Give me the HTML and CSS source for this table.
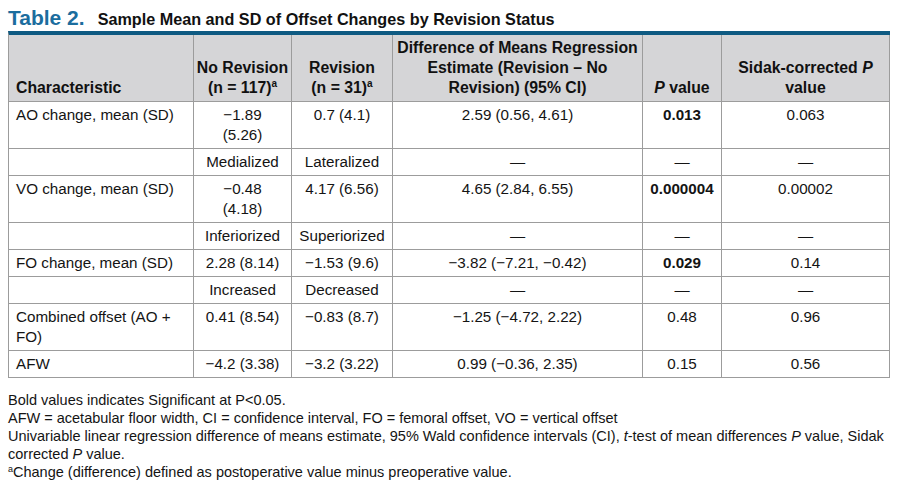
FILE: index.html
```html
<!DOCTYPE html>
<html lang="en">
<head>
<meta charset="utf-8">
<title>Table 2</title>
<link rel="stylesheet" href="styles.css">
</head>
<body>
<div class="page">
  <div class="title">
    <span class="label">Table 2.</span><span class="caption">Sample Mean and SD of Offset Changes by Revision Status</span>
  </div>
  <table class="data">
    <colgroup>
      <col class="c1"><col class="c2"><col class="c3"><col class="c4"><col class="c5"><col class="c6">
    </colgroup>
    <thead>
      <tr>
        <th class="left">Characteristic</th>
        <th>No Revision<br>(n = 117)<sup>a</sup></th>
        <th>Revision<br>(n = 31)<sup>a</sup></th>
        <th>Difference of Means Regression<br>Estimate (Revision – No<br>Revision) (95% CI)</th>
        <th><i>P</i> value</th>
        <th>Sidak-corrected <i>P</i><br>value</th>
      </tr>
    </thead>
    <tbody>
      <tr>
        <td class="left">AO change, mean (SD)</td>
        <td>−1.89<br>(5.26)</td>
        <td>0.7 (4.1)</td>
        <td>2.59 (0.56, 4.61)</td>
        <td><b>0.013</b></td>
        <td>0.063</td>
      </tr>
      <tr>
        <td class="left"></td>
        <td>Medialized</td>
        <td>Lateralized</td>
        <td>—</td>
        <td>—</td>
        <td>—</td>
      </tr>
      <tr>
        <td class="left">VO change, mean (SD)</td>
        <td>−0.48<br>(4.18)</td>
        <td>4.17 (6.56)</td>
        <td>4.65 (2.84, 6.55)</td>
        <td><b>0.000004</b></td>
        <td>0.00002</td>
      </tr>
      <tr>
        <td class="left"></td>
        <td>Inferiorized</td>
        <td>Superiorized</td>
        <td>—</td>
        <td>—</td>
        <td>—</td>
      </tr>
      <tr>
        <td class="left">FO change, mean (SD)</td>
        <td>2.28 (8.14)</td>
        <td>−1.53 (9.6)</td>
        <td>−3.82 (−7.21, −0.42)</td>
        <td><b>0.029</b></td>
        <td>0.14</td>
      </tr>
      <tr>
        <td class="left"></td>
        <td>Increased</td>
        <td>Decreased</td>
        <td>—</td>
        <td>—</td>
        <td>—</td>
      </tr>
      <tr>
        <td class="left">Combined offset (AO +<br>FO)</td>
        <td>0.41 (8.54)</td>
        <td>−0.83 (8.7)</td>
        <td>−1.25 (−4.72, 2.22)</td>
        <td>0.48</td>
        <td>0.96</td>
      </tr>
      <tr>
        <td class="left">AFW</td>
        <td>−4.2 (3.38)</td>
        <td>−3.2 (3.22)</td>
        <td>0.99 (−0.36, 2.35)</td>
        <td>0.15</td>
        <td>0.56</td>
      </tr>
    </tbody>
  </table>
  <div class="notes">
    <p>Bold values indicates Significant at P&lt;0.05.</p>
    <p>AFW = acetabular floor width, CI = confidence interval, FO = femoral offset, VO = vertical offset</p>
    <p>Univariable linear regression difference of means estimate, 95% Wald confidence intervals (CI), <i>t</i>-test of mean differences <i>P</i> value, Sidak<br>corrected <i>P</i> value.</p>
    <p><sup>a</sup>Change (difference) defined as postoperative value minus preoperative value.</p>
  </div>
</div>
</body>
</html>
```

FILE: styles.css
```css
html, body {
  margin: 0;
  padding: 0;
  background: #ffffff;
}

body {
  font-family: "Liberation Sans", Arial, Helvetica, sans-serif;
  color: #141414;
}

.page {
  padding: 0 8px;
}

.title {
  height: 25px;
  padding-top: 6px;
  font-size: 21px;
  line-height: 24px;
  white-space: nowrap;
}

.title .label {
  font-weight: bold;
  color: #1b6d9e;
  margin-right: 13px;
}

.title .caption {
  font-size: 16.2px;
  font-weight: bold;
  color: #111111;
}

.data {
  width: 882px;
  table-layout: fixed;
  border-collapse: separate;
  border-spacing: 0;
  border-top: 4px solid #0e5a82;
  border-left: 1px solid #9c9c9c;
  font-size: 15.2px;
  line-height: 20px;
}

.c1 { width: 185px; }
.c2 { width: 98px; }
.c3 { width: 101px; }
.c4 { width: 250px; }
.c5 { width: 79px; }
.c6 { width: 168px; }

.data th,
.data td {
  border-right: 1px solid #9c9c9c;
  border-bottom: 1px solid #9c9c9c;
  padding: 3px 4px;
  text-align: center;
}

.data th {
  background: #d5d5d7;
  vertical-align: bottom;
  font-size: 15.8px;
  font-weight: bold;
  color: #111111;
  padding: 3px 2px;
}

.data td {
  vertical-align: top;
  white-space: nowrap;
}

.data .left {
  text-align: left;
  padding-left: 7px;
}

.data sup {
  font-size: 10px;
  line-height: 0;
  vertical-align: 6px;
}

.notes {
  width: 882px;
  margin-top: 13px;
  font-size: 14.5px;
  line-height: 18px;
  color: #141414;
}

.notes p {
  margin: 0;
  white-space: nowrap;
}

.notes sup {
  font-size: 9px;
  line-height: 0;
  vertical-align: 5px;
}
```
